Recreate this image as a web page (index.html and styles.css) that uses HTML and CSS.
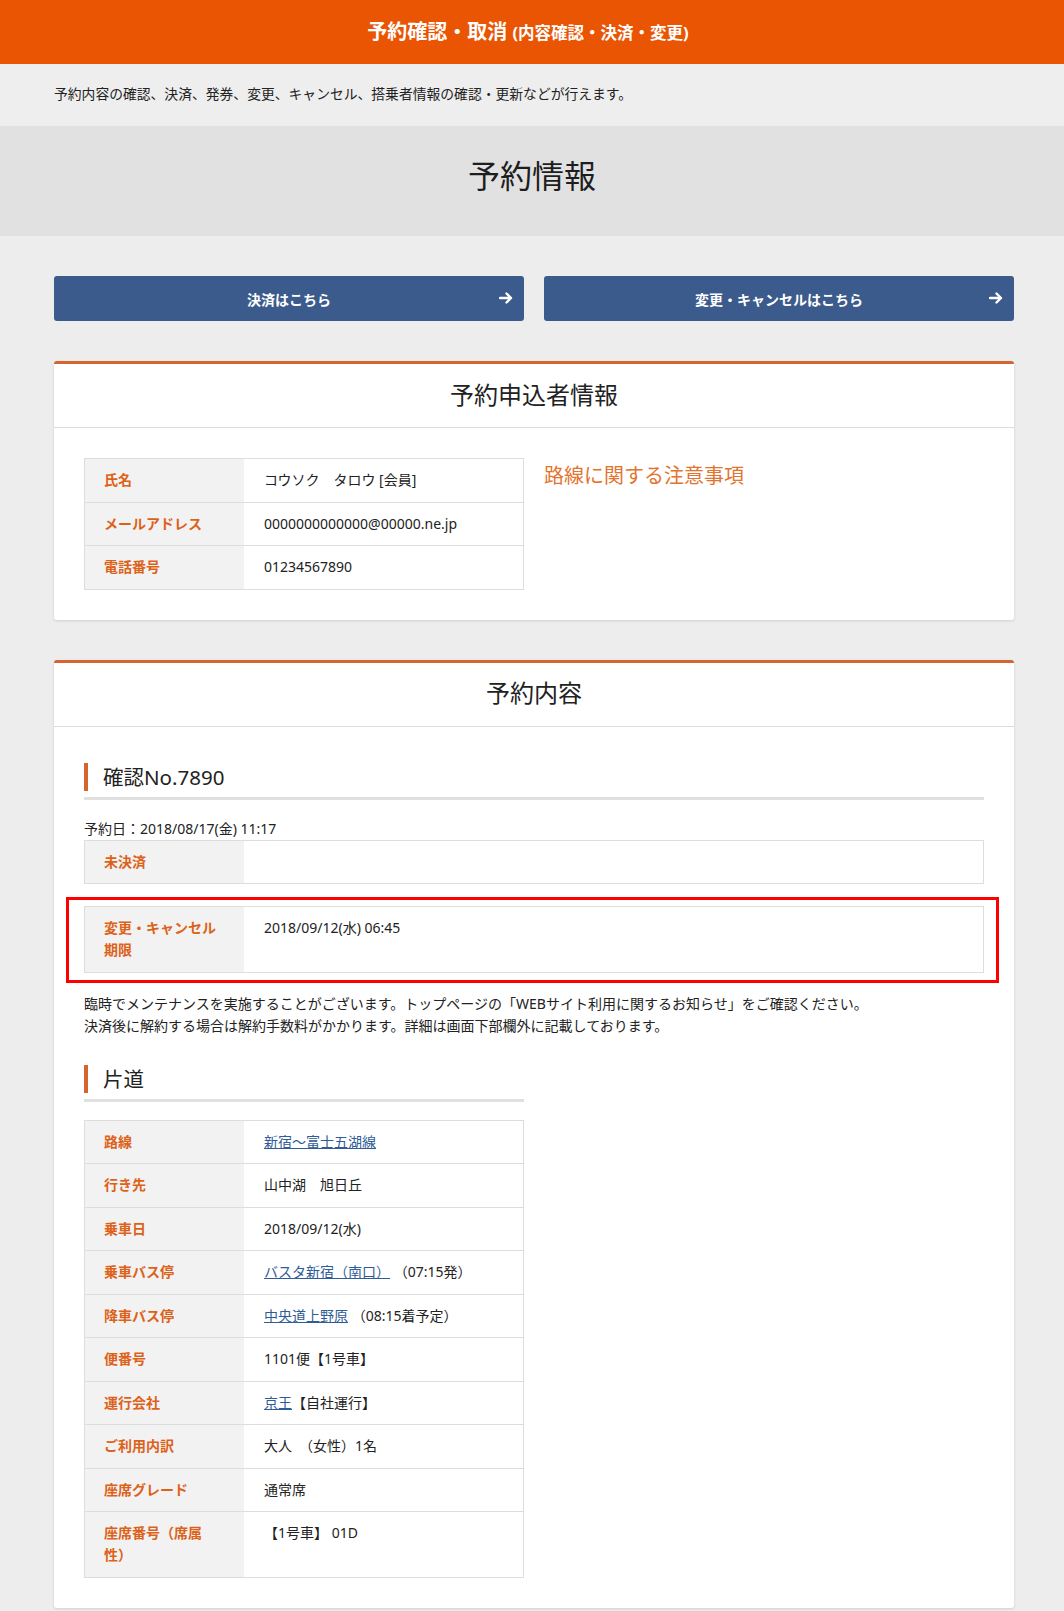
FILE: index.html
```html
<!DOCTYPE html>
<html lang="ja">
<head>
    <meta charset="utf-8">
    <meta name="viewport" content="width=device-width, initial-scale=1">
    <title>予約確認・取消</title>
    <link rel="stylesheet" href="styles.css">
</head>
<body>

<header class="topbar">
    <p class="topbar-title">予約確認・取消 <small>(内容確認・決済・変更)</small></p>
</header>

<div class="lead">
    <p>予約内容の確認、決済、発券、変更、キャンセル、搭乗者情報の確認・更新などが行えます。</p>
</div>

<div class="page-title">
    <h1>予約情報</h1>
</div>

<main class="container">

    <div class="btn-row">
        <a href="#" class="btn">決済はこちら
            <svg class="btn-arrow" width="14" height="12" viewBox="0 0 14 12"><path d="M1 6h11M7.5 1.5L12 6l-4.5 4.5" fill="none" stroke="#fff" stroke-width="2.4" stroke-linecap="round" stroke-linejoin="round"/></svg>
        </a>
        <a href="#" class="btn">変更・キャンセルはこちら
            <svg class="btn-arrow" width="14" height="12" viewBox="0 0 14 12"><path d="M1 6h11M7.5 1.5L12 6l-4.5 4.5" fill="none" stroke="#fff" stroke-width="2.4" stroke-linecap="round" stroke-linejoin="round"/></svg>
        </a>
    </div>

    <!-- applicant -->
    <section class="card">
        <h2 class="card-head">予約申込者情報</h2>
        <div class="card-body two-col">
            <table class="info">
                <tr><th>氏名</th><td>コウソク　タロウ [会員]</td></tr>
                <tr><th>メールアドレス</th><td>0000000000000@00000.ne.jp</td></tr>
                <tr><th>電話番号</th><td>01234567890</td></tr>
            </table>
            <div>
                <p class="notice-title">路線に関する注意事項</p>
            </div>
        </div>
    </section>

    <!-- reservation -->
    <section class="card">
        <h2 class="card-head">予約内容</h2>
        <div class="card-body">
            <h3 class="sec-head"><span>確認No.7890</span></h3>
            <p class="res-date">予約日：2018/08/17(金) 11:17</p>
            <table class="info">
                <tr><th>未決済</th><td></td></tr>
            </table>

            <div class="highlight">
                <table class="info">
                    <tr><th>変更・キャンセル期限</th><td>2018/09/12(水) 06:45</td></tr>
                </table>
            </div>

            <p class="note">臨時でメンテナンスを実施することがございます。トップページの「WEBサイト利用に関するお知らせ」をご確認ください。<br>
            決済後に解約する場合は解約手数料がかかります。詳細は画面下部欄外に記載しております。</p>

            <div class="half">
                <h3 class="sec-head trip"><span>片道</span></h3>
                <table class="info trip-table">
                    <tr><th>路線</th><td><a href="#">新宿～富士五湖線</a></td></tr>
                    <tr><th>行き先</th><td>山中湖　旭日丘</td></tr>
                    <tr><th>乗車日</th><td>2018/09/12(水)</td></tr>
                    <tr><th>乗車バス停</th><td><a href="#">バスタ新宿（南口）</a> （07:15発）</td></tr>
                    <tr><th>降車バス停</th><td><a href="#">中央道上野原</a> （08:15着予定）</td></tr>
                    <tr><th>便番号</th><td>1101便【1号車】</td></tr>
                    <tr><th>運行会社</th><td><a href="#">京王</a>【自社運行】</td></tr>
                    <tr><th>ご利用内訳</th><td>大人　（女性）1名</td></tr>
                    <tr><th>座席グレード</th><td>通常席</td></tr>
                    <tr><th>座席番号（席属性）</th><td>【1号車】 01D</td></tr>
                </table>
            </div>
        </div>
    </section>

</main>

</body>
</html>
```

FILE: styles.css
```css
body {
    margin: 0;
    padding: 0;
    font-family: "Noto Sans", "Noto Sans CJK JP", sans-serif;
    font-size: 14px;
    color: #222;
    background-color: #ededed;
}

p, h1, h2, h3 {
    margin: 0;
}

.topbar {
    background-color: #ea5504;
    height: 64px;
    display: flex;
    justify-content: center;
    align-items: center;
}

.topbar-title {
    color: #fff;
    font-weight: bold;
    font-size: 20px;
    padding: 0 8px 4px 0;
}

.topbar-title small {
    font-size: 16.5px;
}

.lead {
    background-color: #eeeeee;
    height: 62px;
    display: flex;
    align-items: center;
    padding-left: 54px;
}

.lead p {
    font-size: 13.8px;
    padding-bottom: 4px;
}

.page-title {
    background-color: #e1e1e1;
    height: 110px;
    display: flex;
    justify-content: center;
    align-items: center;
}

.page-title h1 {
    font-size: 32px;
    font-weight: normal;
    color: #1e1e1e;
    line-height: 1;
    padding-bottom: 10px;
}

.container {
    width: 960px;
    margin: 0 0 0 54px;
    padding: 40px 0 40px;
}

.btn-row {
    display: grid;
    grid-template-columns: 1fr 1fr;
    gap: 20px;
    margin-bottom: 40px;
}

.btn {
    position: relative;
    display: flex;
    justify-content: center;
    align-items: center;
    height: 45px;
    background-color: #3b5b8c;
    color: #fff;
    font-weight: bold;
    font-size: 14px;
    text-decoration: none;
    border-radius: 3px;
}

.btn-arrow {
    position: absolute; /* sits over the right end of the button */
    right: 11px;
    top: 16px;
}

.card {
    background-color: #fff;
    border-top: 3px solid #d4652d;
    border-radius: 3px;
    box-shadow: 0 1px 3px rgba(0, 0, 0, 0.12);
    margin-bottom: 40px;
}

.card-head {
    height: 64px;
    box-sizing: border-box;
    padding-bottom: 5px;
    display: flex;
    justify-content: center;
    align-items: center;
    font-size: 24px;
    font-weight: normal;
    color: #222;
    border-bottom: 1px solid #dcdcdc;
}

.card-body {
    padding: 30px;
}

.two-col {
    display: grid;
    grid-template-columns: 440px 440px;
    gap: 20px;
}

.notice-title {
    color: #e2742e;
    font-size: 20px;
    padding-top: 2px;
}

.info {
    width: 100%;
    border-collapse: collapse;
    border: 1px solid #dddddd;
}

.info th,
.info td {
    border-top: 1px solid #dddddd;
    line-height: 22px;
    vertical-align: top;
    text-align: left;
}

.info th {
    width: 115px;
    padding: 10.25px 25px 10.25px 19px;
    background-color: #f2f2f2;
    color: #dd6219;
    font-weight: bold;
    font-size: 14px;
}

.info td {
    padding: 10.25px 20px;
    font-size: 14px;
}

.info a {
    color: #2f5c96;
}

.sec-head {
    padding: 6px 0;
    border-bottom: 3px solid #e0e0e0;
    font-size: 20.5px;
    font-weight: normal;
}

.sec-head span {
    display: block;
    line-height: 28px;
    border-left: 4px solid #d4652d;
    padding-left: 15px;
}

.res-date {
    margin-top: 18px;
    line-height: 22px;
    font-size: 14px;
}

.highlight {
    margin: 13px -15px 0 -18px;
    border: 3px solid #ff0000;
    padding: 6px 12px 7px 15px;
}

.note {
    margin-top: 10px;
    line-height: 22px;
    font-size: 14px;
}

.half {
    width: 440px;
}

.sec-head.trip {
    margin-top: 22px;
}

.trip-table {
    margin-top: 18px;
}
```
